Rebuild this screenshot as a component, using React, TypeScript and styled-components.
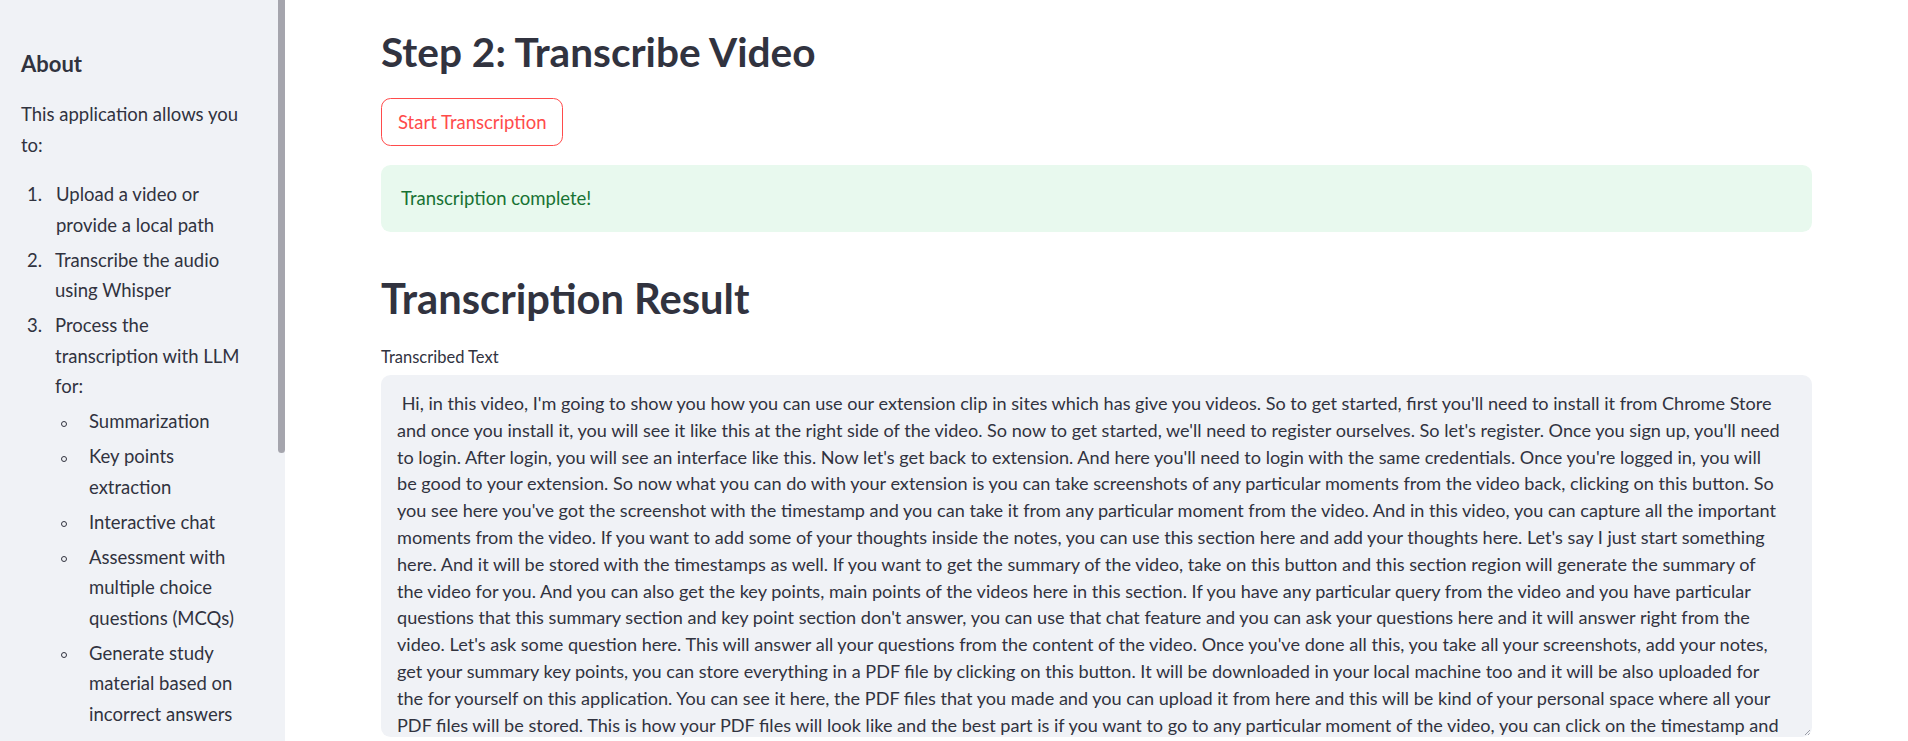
import styled, { createGlobalStyle } from "styled-components";

const GlobalStyle = createGlobalStyle`
  html, body {
    margin: 0;
    padding: 0;
    background: #fff;
  }
  body {
    font-family: Lato, "Noto Sans", sans-serif;
    color: #31333f;
  }
`;

const Page = styled.div`
  display: flex;
  height: 100vh;
  overflow: hidden;
`;

const Sidebar = styled.aside`
  position: relative;
  flex: 0 0 285px;
  box-sizing: border-box;
  padding: 51px 21px 0;
  background: #f0f2f6;
  overflow: hidden;
`;

const ScrollThumb = styled.div`
  position: absolute;
  top: 0;
  right: 0;
  width: 7px;
  height: 453px;
  background: #a5a5ad;
  border-radius: 0 0 4px 4px;
`;

const SideTitle = styled.h3`
  margin: 0 0 22px;
  font-size: 22px;
  line-height: 26.4px;
  font-weight: 700;
`;

const SideText = styled.p`
  margin: 0 0 19px;
  width: 250px;
  font-size: 18.5px;
  line-height: 30.5px;
`;

const List = styled.ul`
  list-style: none;
  margin: 0;
  padding: 0;
  width: 250px;
  font-size: 18.5px;
  line-height: 30.5px;
`;

const Item = styled.li<{ $first?: boolean }>`
  display: grid;
  grid-template-columns: ${(p) => (p.$first ? "35px" : "34px")} 1fr;
  margin-top: ${(p) => (p.$first ? "0" : "4.5px")};
`;

const Num = styled.span`
  padding-left: 6px;
`;

const Bullet = styled.span`
  display: flex;
  align-items: center;
  height: 30.5px;
  padding-left: 6px;
  &::after {
    content: "";
    width: 4px;
    height: 4px;
    margin-top: 4px;
    border: 1px solid #31333f;
    border-radius: 50%;
  }
`;

const Main = styled.main`
  flex: 1;
  display: flex;
  flex-direction: column;
  align-items: flex-start;
  padding: 28px 96px 0;
  min-width: 0;
`;

const Title = styled.h2`
  margin: 0 0 21.5px;
  font-size: 40.6px;
  line-height: 48px;
  font-weight: 700;
  color: #31333f;
`;

const Button = styled.button`
  box-sizing: border-box;
  height: 48px;
  margin: 0 0 19px;
  padding: 0 16px;
  border: 1px solid #ff4b4b;
  border-radius: 9.6px;
  background: #fff;
  color: #ff4b4b;
  font-family: inherit;
  font-size: 18.5px;
  cursor: pointer;
`;

const Success = styled.div`
  align-self: stretch;
  box-sizing: border-box;
  display: flex;
  align-items: center;
  height: 67px;
  margin: 0 0 41px;
  padding: 0 20px;
  border-radius: 9.6px;
  background: #e8f9ee;
  color: #177233;
  font-size: 18.5px;
`;

const Heading = styled.h1`
  margin: 0 0 24.5px;
  font-size: 41.7px;
  line-height: 50px;
  font-weight: 700;
  color: #31333f;
`;

const Label = styled.label`
  margin: 0 0 8.4px;
  font-size: 16.5px;
  line-height: 20px;
`;

const TextBox = styled.div`
  position: relative;
  align-self: stretch;
  box-sizing: border-box;
  height: 362px;
  padding: 14.6px 16px 0;
  border-radius: 9.6px;
  background: #f0f2f6;
  overflow: hidden;
  font-size: 18.1px;
  line-height: 26.8px;
`;

const Line = styled.div`
  white-space: pre;
`;

const Grip = styled.svg`
  position: absolute;
  right: 1px;
  bottom: 1px;
`;

const lines = [
  " Hi, in this video, I'm going to show you how you can use our extension clip in sites which has give you videos. So to get started, first you'll need to install it from Chrome Store",
  "and once you install it, you will see it like this at the right side of the video. So now to get started, we'll need to register ourselves. So let's register. Once you sign up, you'll need",
  "to login. After login, you will see an interface like this. Now let's get back to extension. And here you'll need to login with the same credentials. Once you're logged in, you will",
  "be good to your extension. So now what you can do with your extension is you can take screenshots of any particular moments from the video back, clicking on this button. So",
  "you see here you've got the screenshot with the timestamp and you can take it from any particular moment from the video. And in this video, you can capture all the important",
  "moments from the video. If you want to add some of your thoughts inside the notes, you can use this section here and add your thoughts here. Let's say I just start something",
  "here. And it will be stored with the timestamps as well. If you want to get the summary of the video, take on this button and this section region will generate the summary of",
  "the video for you. And you can also get the key points, main points of the videos here in this section. If you have any particular query from the video and you have particular",
  "questions that this summary section and key point section don't answer, you can use that chat feature and you can ask your questions here and it will answer right from the",
  "video. Let's ask some question here. This will answer all your questions from the content of the video. Once you've done all this, you take all your screenshots, add your notes,",
  "get your summary key points, you can store everything in a PDF file by clicking on this button. It will be downloaded in your local machine too and it will be also uploaded for",
  "the for yourself on this application. You can see it here, the PDF files that you made and you can upload it from here and this will be kind of your personal space where all your",
  "PDF files will be stored. This is how your PDF files will look like and the best part is if you want to go to any particular moment of the video, you can click on the timestamp and",
];

const uses = [
  ["Summarization"],
  ["Key points", "extraction"],
  ["Interactive chat"],
  ["Assessment with", "multiple choice", "questions (MCQs)"],
  ["Generate study", "material based on", "incorrect answers"],
];

function Wrapped({ parts }: { parts: string[] }) {
  return (
    <span>
      {parts.map((p, i) => (
        <span key={i}>
          {i > 0 && <br />}
          {p}
        </span>
      ))}
    </span>
  );
}

export default function App() {
  return (
    <>
      <GlobalStyle />
      <Page>
        <Sidebar>
          <SideTitle>About</SideTitle>
          <SideText>
            This application allows you
            <br />
            to:
          </SideText>
          <List as="ol">
            <Item $first>
              <Num>1.</Num>
              <Wrapped parts={["Upload a video or", "provide a local path"]} />
            </Item>
            <Item $first={false}>
              <Num>2.</Num>
              <Wrapped parts={["Transcribe the audio", "using Whisper"]} />
            </Item>
            <Item $first={false}>
              <Num>3.</Num>
              <div>
                <Wrapped parts={["Process the", "transcription with LLM", "for:"]} />
                <List>
                  {uses.map((u) => (
                    <Item key={u[0]} $first={false}>
                      <Bullet />
                      <Wrapped parts={u} />
                    </Item>
                  ))}
                </List>
              </div>
            </Item>
          </List>
          <ScrollThumb />
        </Sidebar>
        <Main>
          <Title>Step 2: Transcribe Video</Title>
          <Button>Start Transcription</Button>
          <Success>Transcription complete!</Success>
          <Heading>Transcription Result</Heading>
          <Label>Transcribed Text</Label>
          <TextBox>
            {lines.map((l, i) => (
              <Line key={i}>{l}</Line>
            ))}
            <Grip width="7" height="7" viewBox="0 0 7 7">
              <path d="M6 1 L1 6 M6 4 L4 6" stroke="#9a9ca6" strokeWidth="1" />
            </Grip>
          </TextBox>
        </Main>
      </Page>
    </>
  );
}
